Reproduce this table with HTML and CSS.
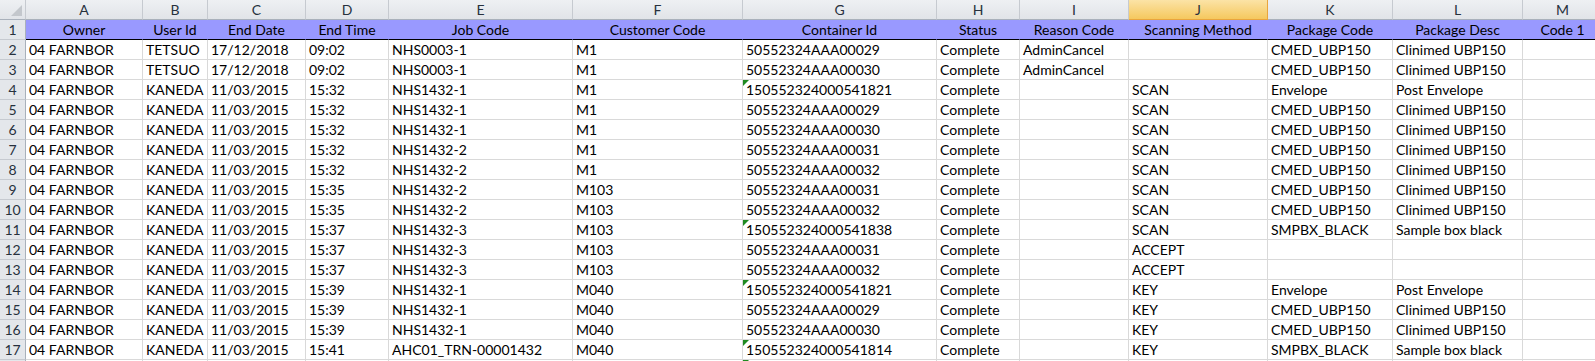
FILE: index.html
```html
<!DOCTYPE html>
<html lang="en">

<head>
    <meta charset="UTF-8">
    <title>Sheet1</title>
    <link rel="stylesheet" href="styles.css">
</head>

<body>
    <table class="sheet">
        <colgroup>
            <col class="c-hdr">
            <col class="c-a">
            <col class="c-b">
            <col class="c-c">
            <col class="c-d">
            <col class="c-e">
            <col class="c-f">
            <col class="c-g">
            <col class="c-h">
            <col class="c-i">
            <col class="c-j">
            <col class="c-k">
            <col class="c-l">
            <col class="c-m">
        </colgroup>
        <thead>
            <tr class="letters">
                <th class="corner"><span class="corner-tri"></span></th>
                <th>A</th><th>B</th><th>C</th><th>D</th><th>E</th><th>F</th><th>G</th>
                <th>H</th><th>I</th><th class="selected">J</th><th>K</th><th>L</th><th>M</th>
            </tr>
        </thead>
        <tbody>
            <tr class="titles">
                <th>1</th>
                <td>Owner</td><td>User Id</td><td>End Date</td><td>End Time</td><td>Job Code</td>
                <td>Customer Code</td><td>Container Id</td><td>Status</td><td>Reason Code</td>
                <td>Scanning Method</td><td>Package Code</td><td>Package Desc</td><td>Code 1</td>
            </tr>
            <tr>
                <th>2</th>
                <td>04 FARNBOR</td><td>TETSUO</td><td>17/12/2018</td><td>09:02</td><td>NHS0003-1</td>
                <td>M1</td><td>50552324AAA00029</td><td>Complete</td><td>AdminCancel</td>
                <td></td><td>CMED_UBP150</td><td>Clinimed UBP150</td><td></td>
            </tr>
            <tr>
                <th>3</th>
                <td>04 FARNBOR</td><td>TETSUO</td><td>17/12/2018</td><td>09:02</td><td>NHS0003-1</td>
                <td>M1</td><td>50552324AAA00030</td><td>Complete</td><td>AdminCancel</td>
                <td></td><td>CMED_UBP150</td><td>Clinimed UBP150</td><td></td>
            </tr>
            <tr>
                <th>4</th>
                <td>04 FARNBOR</td><td>KANEDA</td><td>11/03/2015</td><td>15:32</td><td>NHS1432-1</td>
                <td>M1</td><td class="warn">150552324000541821</td><td>Complete</td><td></td>
                <td>SCAN</td><td>Envelope</td><td>Post Envelope</td><td></td>
            </tr>
            <tr>
                <th>5</th>
                <td>04 FARNBOR</td><td>KANEDA</td><td>11/03/2015</td><td>15:32</td><td>NHS1432-1</td>
                <td>M1</td><td>50552324AAA00029</td><td>Complete</td><td></td>
                <td>SCAN</td><td>CMED_UBP150</td><td>Clinimed UBP150</td><td></td>
            </tr>
            <tr>
                <th>6</th>
                <td>04 FARNBOR</td><td>KANEDA</td><td>11/03/2015</td><td>15:32</td><td>NHS1432-1</td>
                <td>M1</td><td>50552324AAA00030</td><td>Complete</td><td></td>
                <td>SCAN</td><td>CMED_UBP150</td><td>Clinimed UBP150</td><td></td>
            </tr>
            <tr>
                <th>7</th>
                <td>04 FARNBOR</td><td>KANEDA</td><td>11/03/2015</td><td>15:32</td><td>NHS1432-2</td>
                <td>M1</td><td>50552324AAA00031</td><td>Complete</td><td></td>
                <td>SCAN</td><td>CMED_UBP150</td><td>Clinimed UBP150</td><td></td>
            </tr>
            <tr>
                <th>8</th>
                <td>04 FARNBOR</td><td>KANEDA</td><td>11/03/2015</td><td>15:32</td><td>NHS1432-2</td>
                <td>M1</td><td>50552324AAA00032</td><td>Complete</td><td></td>
                <td>SCAN</td><td>CMED_UBP150</td><td>Clinimed UBP150</td><td></td>
            </tr>
            <tr>
                <th>9</th>
                <td>04 FARNBOR</td><td>KANEDA</td><td>11/03/2015</td><td>15:35</td><td>NHS1432-2</td>
                <td>M103</td><td>50552324AAA00031</td><td>Complete</td><td></td>
                <td>SCAN</td><td>CMED_UBP150</td><td>Clinimed UBP150</td><td></td>
            </tr>
            <tr>
                <th>10</th>
                <td>04 FARNBOR</td><td>KANEDA</td><td>11/03/2015</td><td>15:35</td><td>NHS1432-2</td>
                <td>M103</td><td>50552324AAA00032</td><td>Complete</td><td></td>
                <td>SCAN</td><td>CMED_UBP150</td><td>Clinimed UBP150</td><td></td>
            </tr>
            <tr>
                <th>11</th>
                <td>04 FARNBOR</td><td>KANEDA</td><td>11/03/2015</td><td>15:37</td><td>NHS1432-3</td>
                <td>M103</td><td class="warn">150552324000541838</td><td>Complete</td><td></td>
                <td>SCAN</td><td>SMPBX_BLACK</td><td>Sample box black</td><td></td>
            </tr>
            <tr>
                <th>12</th>
                <td>04 FARNBOR</td><td>KANEDA</td><td>11/03/2015</td><td>15:37</td><td>NHS1432-3</td>
                <td>M103</td><td>50552324AAA00031</td><td>Complete</td><td></td>
                <td>ACCEPT</td><td></td><td></td><td></td>
            </tr>
            <tr>
                <th>13</th>
                <td>04 FARNBOR</td><td>KANEDA</td><td>11/03/2015</td><td>15:37</td><td>NHS1432-3</td>
                <td>M103</td><td>50552324AAA00032</td><td>Complete</td><td></td>
                <td>ACCEPT</td><td></td><td></td><td></td>
            </tr>
            <tr>
                <th>14</th>
                <td>04 FARNBOR</td><td>KANEDA</td><td>11/03/2015</td><td>15:39</td><td>NHS1432-1</td>
                <td>M040</td><td class="warn">150552324000541821</td><td>Complete</td><td></td>
                <td>KEY</td><td>Envelope</td><td>Post Envelope</td><td></td>
            </tr>
            <tr>
                <th>15</th>
                <td>04 FARNBOR</td><td>KANEDA</td><td>11/03/2015</td><td>15:39</td><td>NHS1432-1</td>
                <td>M040</td><td>50552324AAA00029</td><td>Complete</td><td></td>
                <td>KEY</td><td>CMED_UBP150</td><td>Clinimed UBP150</td><td></td>
            </tr>
            <tr>
                <th>16</th>
                <td>04 FARNBOR</td><td>KANEDA</td><td>11/03/2015</td><td>15:39</td><td>NHS1432-1</td>
                <td>M040</td><td>50552324AAA00030</td><td>Complete</td><td></td>
                <td>KEY</td><td>CMED_UBP150</td><td>Clinimed UBP150</td><td></td>
            </tr>
            <tr>
                <th>17</th>
                <td>04 FARNBOR</td><td>KANEDA</td><td>11/03/2015</td><td>15:41</td><td>AHC01_TRN-00001432</td>
                <td>M040</td><td class="warn">150552324000541814</td><td>Complete</td><td></td>
                <td>KEY</td><td>SMPBX_BLACK</td><td>Sample box black</td><td></td>
            </tr>
            <tr>
                <th></th>
                <td></td><td></td><td></td><td></td><td></td>
                <td></td><td class="warn"></td><td></td><td></td>
                <td></td><td></td><td></td><td></td>
            </tr>
        </tbody>
    </table>
</body>

</html>
```

FILE: styles.css
```css
* {
    margin: 0;
    padding: 0;
    box-sizing: border-box;
}

html,
body {
    width: 100%;
    height: 100%;
    overflow: hidden;
    background-color: #ffffff;
}

body {
    font-family: Lato, "Liberation Sans", sans-serif;
    font-size: 14px;
    color: #000000;
}

.sheet {
    table-layout: fixed;
    border-collapse: separate;
    border-spacing: 0;
    width: 1603px;
}

.c-hdr { width: 26px; }
.c-a { width: 117px; }
.c-b { width: 65px; }
.c-c { width: 98px; }
.c-d { width: 83px; }
.c-e { width: 184px; }
.c-f { width: 170px; }
.c-g { width: 194px; }
.c-h { width: 83px; }
.c-i { width: 109px; }
.c-j { width: 139px; }
.c-k { width: 125px; }
.c-l { width: 130px; }
.c-m { width: 80px; }

th,
td {
    height: 20px;
    padding: 0 3px;
    line-height: 19px;
    white-space: nowrap;
    overflow: hidden;
    text-align: left;
    font-weight: 400;
    vertical-align: bottom;
    border-right: 1px solid #d9d9d9;
    border-bottom: 1px solid #d9d9d9;
}

/* column letters */
.letters th {
    text-align: center;
    color: #27313d;
    background: linear-gradient(#eef0f3, #e1e4e8);
    border-right: 1px solid #c6cad0;
    border-bottom: 1px solid #a9b1bb;
}

.letters th.selected {
    background: linear-gradient(#fbe3a6, #f5c85e);
    border-right: 1px solid #e9a53d;
    border-bottom: 1px solid #e9a53d;
}

.corner {
    position: relative;
}

.corner-tri {
    position: absolute;
    right: 3px;
    bottom: 3px;
    width: 0;
    height: 0;
    border-left: 11px solid transparent;
    border-bottom: 11px solid #c3c7cc;
}

/* row numbers */
tbody th {
    text-align: center;
    padding: 0;
    color: #27313d;
    background-color: #e4e7eb;
    border-right: 1px solid #a9b1bb;
    border-bottom: 1px solid #c6cad0;
}

.titles td {
    text-align: center;
    background-color: #9999ff;
    border-right: 1px solid #9999ff;
    border-bottom: 1px solid #000000;
}

.warn {
    position: relative;
}

.warn::before {
    content: "";
    position: absolute;
    left: 0;
    top: 0;
    border-top: 6px solid #1f8a1f;
    border-right: 6px solid transparent;
}
```
